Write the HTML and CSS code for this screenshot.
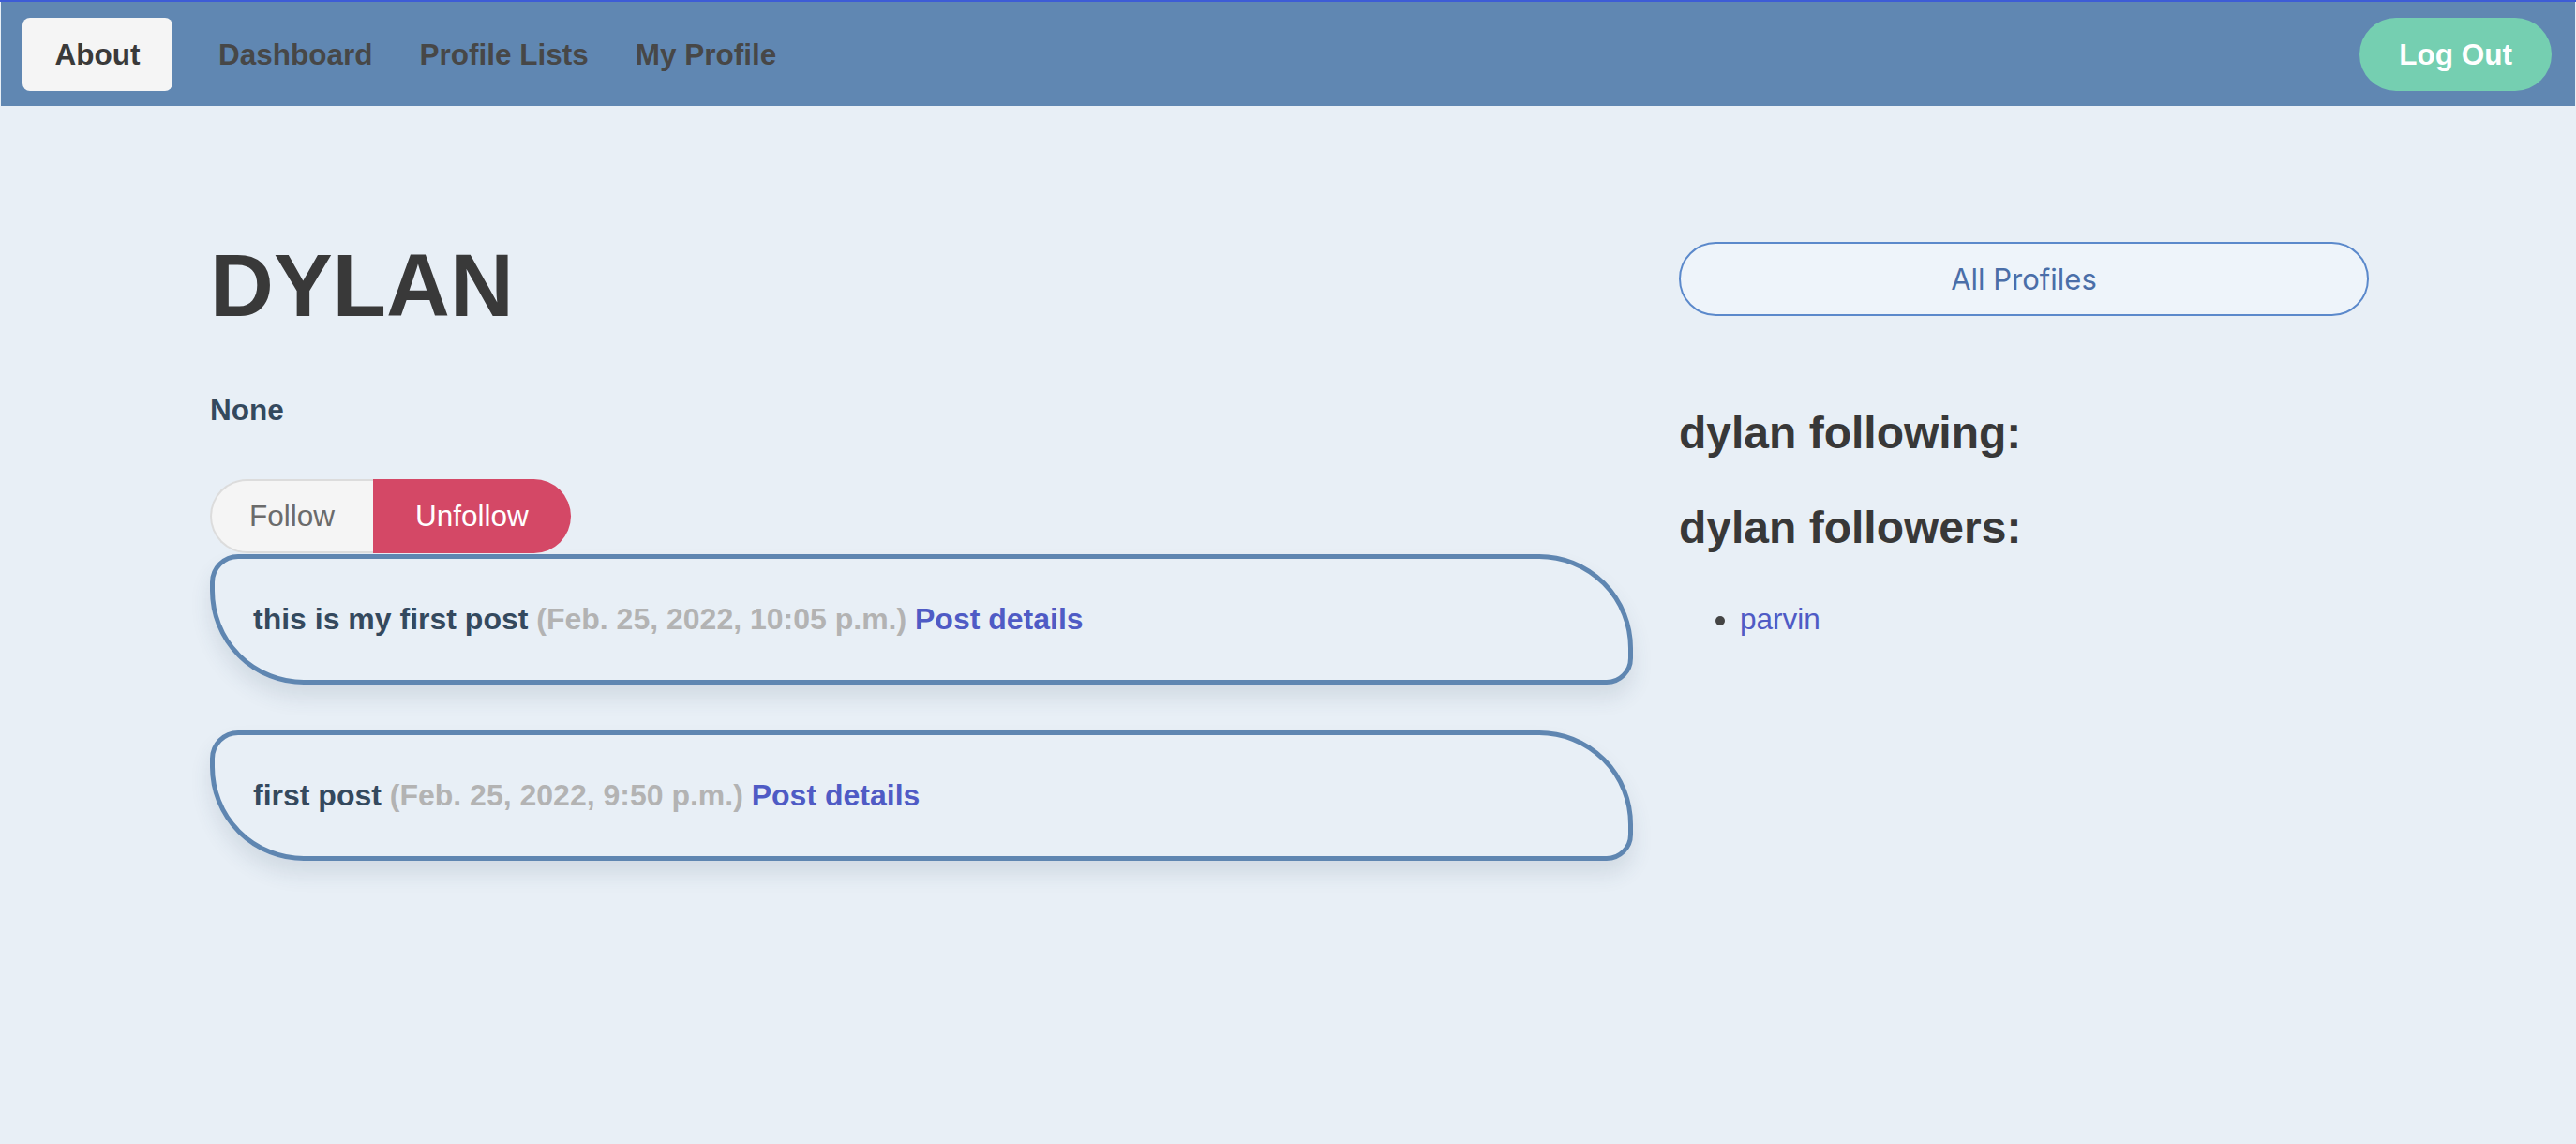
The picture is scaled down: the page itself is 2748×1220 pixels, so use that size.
FILE: index.html
```html
<!DOCTYPE html>
<html lang="en">
<head>
<meta charset="utf-8">
<title>dylan</title>
<link rel="stylesheet" href="styles.css">
</head>
<body>
<nav class="navbar">
  <div class="nav-links">
    <a class="nav-link active" href="#">About</a>
    <a class="nav-link" href="#">Dashboard</a>
    <a class="nav-link" href="#">Profile Lists</a>
    <a class="nav-link" href="#">My Profile</a>
  </div>
  <a class="logout" href="#">Log Out</a>
</nav>
<main class="main">
  <section class="left-col">
    <h1 class="profile-name">DYLAN</h1>
    <p class="bio">None</p>
    <div class="follow-group">
      <button class="btn-follow">Follow</button>
      <button class="btn-unfollow">Unfollow</button>
    </div>
    <div class="post-card">
      <span class="post-body">this is my first post</span>
      <span class="post-date">(Feb. 25, 2022, 10:05 p.m.)</span>
      <a class="post-link" href="#">Post details</a>
    </div>
    <div class="post-card">
      <span class="post-body">first post</span>
      <span class="post-date">(Feb. 25, 2022, 9:50 p.m.)</span>
      <a class="post-link" href="#">Post details</a>
    </div>
  </section>
  <aside class="right-col">
    <a class="all-profiles" href="#">All Profiles</a>
    <h2 class="side-heading first">dylan following:</h2>
    <h2 class="side-heading">dylan followers:</h2>
    <ul class="follow-list">
      <li><a href="#">parvin</a></li>
    </ul>
  </aside>
</main>
</body>
</html>
```
FILE: styles.css
```css
html, body {
  margin: 0;
  padding: 0;
}
body {
  background: #e8eff6;
  font-family: "Liberation Sans", Arial, Helvetica, sans-serif;
  border-top: 2px solid #3d5cd6;
  min-height: 1218px;
}
.navbar {
  height: 111px;
  margin: 0 1px;
  background: #6087b2;
  display: flex;
  align-items: center;
  padding: 0 25px 0 23px;
}
.nav-links {
  display: flex;
  align-items: center;
}
.nav-link {
  display: block;
  padding: 0 25px;
  font-size: 31.5px;
  font-weight: bold;
  line-height: 78px;
  color: #474747;
  text-decoration: none;
}
.nav-link.active {
  background: #f5f5f5;
  color: #3a3a3a;
  border-radius: 8px;
  padding: 0 34.5px;
  margin-right: 24px;
}
.logout {
  margin-left: auto;
  background: #75cfb1;
  color: #ffffff;
  font-size: 31.5px;
  font-weight: bold;
  line-height: 78px;
  padding: 0 42px;
  border-radius: 40px;
  text-decoration: none;
}
.main {
  display: grid;
  grid-template-columns: 1518px 736px;
  column-gap: 49px;
  margin-left: 224px;
  padding-top: 134px;
}
.profile-name {
  margin: 0;
  font-size: 94px;
  line-height: 116px;
  font-weight: bold;
  color: #393939;
}
.bio {
  margin: 55px 0 0;
  font-size: 31.5px;
  line-height: 38px;
  font-weight: bold;
  color: #34495e;
}
.follow-group {
  display: flex;
  margin-top: 55px;
}
.follow-group button {
  font-family: "Liberation Sans", Arial, Helvetica, sans-serif;
  font-size: 31.5px;
  height: 79px;
  margin: 0;
  cursor: pointer;
}
.btn-follow {
  background: #f5f5f5;
  color: #6b6b6b;
  border: 2px solid #dcdcdc;
  border-right: none;
  border-radius: 40px 0 0 40px;
  padding: 0 41px 0 40px;
}
.btn-unfollow {
  background: #d44866;
  color: #ffffff;
  border: none;
  border-radius: 0 40px 40px 0;
  padding: 0 45px;
}
.post-card {
  margin-top: 49px;
  border: 5px solid #5f86b1;
  border-radius: 30px 100px 28px 100px;
  padding: 46px 41px;
  font-size: 32px;
  line-height: 37px;
  font-weight: bold;
  box-shadow: 0 14px 22px rgba(50, 70, 100, 0.12);
}
.follow-group + .post-card {
  margin-top: 1px;
}
.post-body {
  color: #34495e;
}
.post-date {
  color: #b3b3b3;
}
.post-link {
  color: #4f5bc5;
  text-decoration: none;
}
.right-col {
  display: flex;
  flex-direction: column;
}
.all-profiles {
  display: block;
  margin-top: 11px;
  height: 75px;
  line-height: 75px;
  border: 2px solid #5b89cb;
  border-radius: 40px;
  background: #eef4fa;
  color: #4a6ea8;
  font-family: Inter, "Liberation Sans", sans-serif;
  font-size: 31px;
  text-align: center;
  text-decoration: none;
}
.side-heading {
  margin: 43px 0 0;
  font-size: 48px;
  line-height: 58px;
  font-weight: bold;
  color: #383838;
}
.side-heading.first {
  margin-top: 96px;
}
.follow-list {
  margin: 49px 0 0;
  padding-left: 65px;
  font-size: 31.5px;
  line-height: 38px;
  color: #444444;
}
.follow-list a {
  color: #4f5bc5;
  text-decoration: none;
}
```
